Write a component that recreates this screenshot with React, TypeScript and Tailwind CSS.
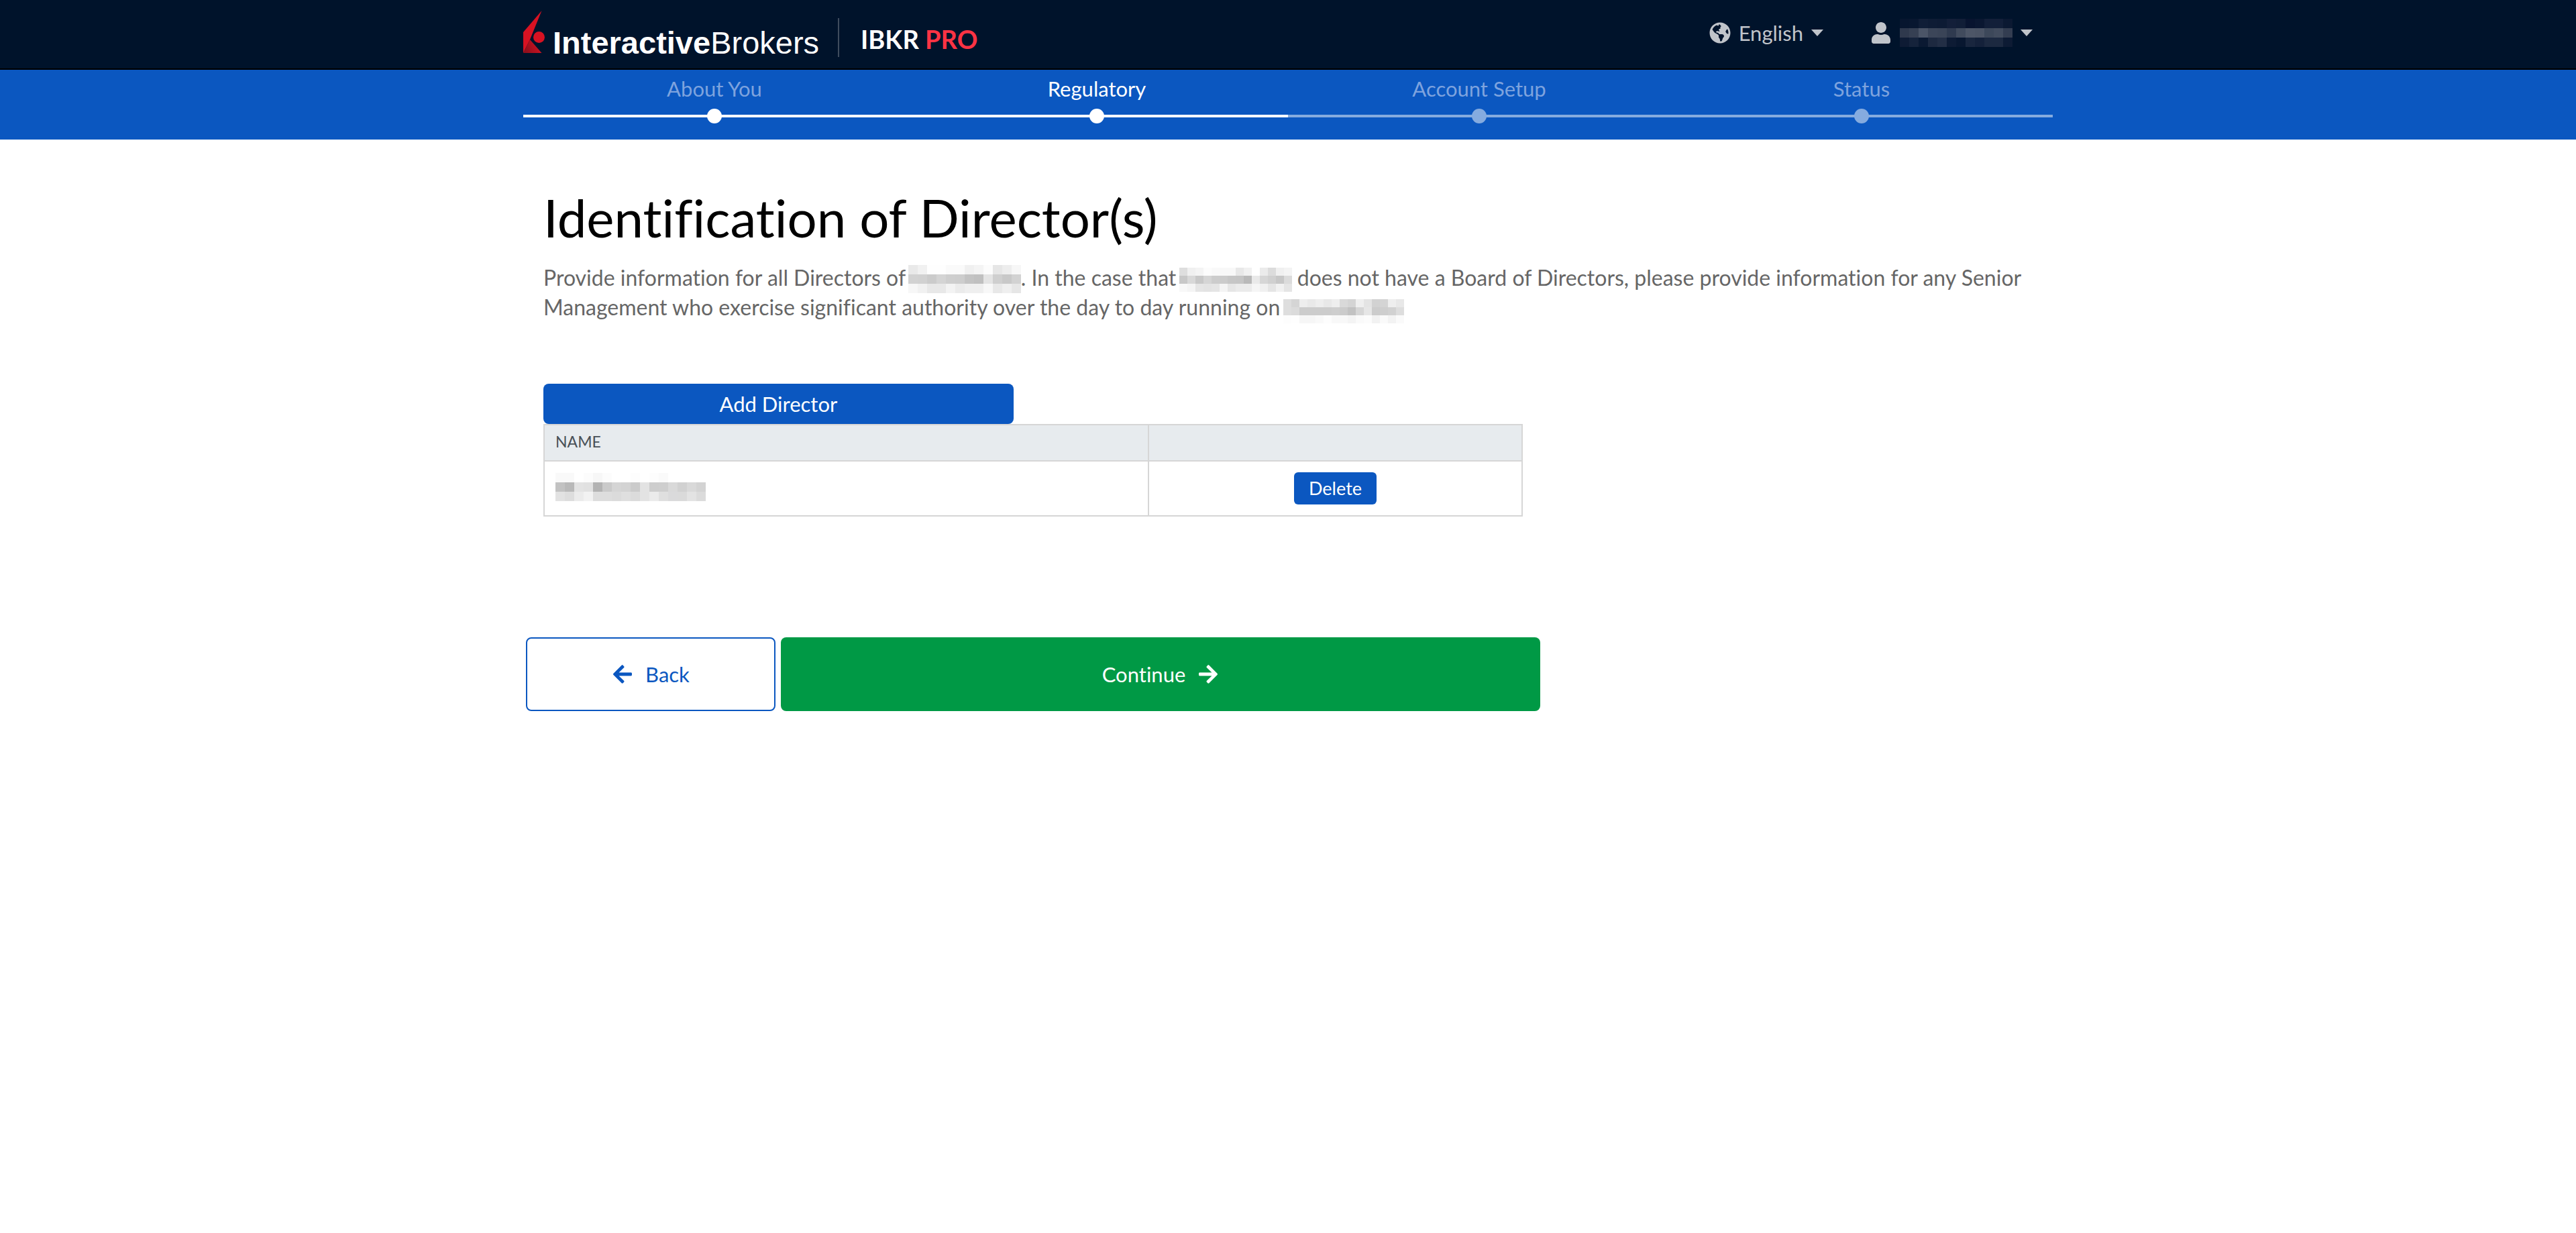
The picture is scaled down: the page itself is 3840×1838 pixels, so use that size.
import React from "react";
import { FaArrowLeft, FaArrowRight, FaGlobeAmericas, FaUser } from "react-icons/fa";

type MosaicProps = { label: string; cell: number; rows: string[][]; className?: string };

/* Redacted text, drawn as a coarse grid of flat tiles. */
function Mosaic({ label, cell, rows, className = "" }: MosaicProps) {
  const width = rows[0].length * cell;
  const height = rows.length * cell;
  return (
    <svg
      role="img"
      aria-label={label}
      width={width}
      height={height}
      viewBox={`0 0 ${width} ${height}`}
      shapeRendering="crispEdges"
      className={className}
    >
      {rows.map((row, y) =>
        row.map((shade, x) => (
          <rect key={`${x}-${y}`} x={x * cell} y={y * cell} width={cell} height={cell} fill={`#${shade}`} />
        )),
      )}
    </svg>
  );
}

const userRows = [
  ["07162f", "081730", "101e37", "0e1c35", "0d1b34", "131f39", "111e37", "08142f", "0a1731", "121f39", "121f39", "0b1932"],
  ["2f394d", "364053", "4b5567", "3c4659", "3a4457", "2f3a4f", "414b5d", "4d5667", "4b5465", "3d485a", "424c5e", "333d51"],
  ["0e1b34", "15233b", "0a1932", "1d2940", "222e45", "0d1b34", "081730", "19263e", "14213a", "1c2940", "1c2940", "0d1b34"],
];
const companyA = [
  ["e9e9e9", "f1f1f1", "fefefe", "fefefe", "fafafa", "fafafa", "f0f0f0", "f4f4f4", "fcfcfc", "e6e6e6", "ededed", "f7f7f7"],
  ["d2d2d2", "d1d1d1", "cbcbcb", "d4d4d4", "cecece", "cdcdcd", "c3c3c3", "c0c0c0", "e4e4e4", "cfcfcf", "c8c8c8", "d2d2d2"],
  ["f7f7f7", "f1f1f1", "e8e8e8", "e8e8e8", "f3f3f3", "ebebeb", "efefef", "efefef", "f8f8f8", "e8e8e8", "efefef", "e6e6e6"],
];
const companyB = [
  ["dedede", "f0f0f0", "f4f4f4", "fcfcfc", "f9f9f9", "f8f8f8", "f8f8f8", "e8e8e8", "f1f1f1", "ffffff", "ebebeb", "dcdcdc", "f0f0f0", "f4f4f4"],
  ["c8c8c8", "d8d8d8", "c8c8c8", "d5d5d5", "cccccc", "cbcbcb", "c6c6c6", "c5c5c5", "b9b9b9", "e9e9e9", "d6d6d6", "d0d0d0", "c7c7c7", "dbdbdb"],
  ["f8f8f8", "f4f4f4", "e5e5e5", "e3e3e3", "e5e5e5", "f4f4f4", "e6e6e6", "ebebeb", "ebebeb", "f5f5f5", "f0f0f0", "e5e5e5", "f1f1f1", "e5e5e5"],
];
const companyC = [
  ["dedede", "d5d5d5", "eeeeee", "e9e9e9", "eeeeee", "e8e8e8", "eeeeee", "d9d9d9", "d4d4d4", "efefef", "e4e4e4", "d2d2d2", "d4d4d4", "eeeeee", "e8e8e8"],
  ["dedede", "dbdbdb", "cccccc", "cccccc", "cccccc", "cccccc", "cecece", "cbcbcb", "c2c2c2", "d6d6d6", "e6e6e6", "cccccc", "cecece", "d1d1d1", "dddddd"],
  ["fdfdfd", "fefefe", "f6f6f6", "f6f6f6", "f9f9f9", "fdfdfd", "f8f8f8", "f8f8f8", "f4f4f4", "fafafa", "fcfcfc", "f2f2f2", "fafafa", "f3f3f3", "fafafa"],
];
const directorRows = [
  ["f9f9f9", "f9f9f9", "ffffff", "fcfcfc", "f7f7f7", "fcfcfc", "ffffff", "ffffff", "fdfdfd", "ffffff", "fdfdfd", "fafafa", "ffffff", "ffffff", "ffffff", "ffffff"],
  ["c2c2c2", "b9b9b9", "e3e3e3", "e1e1e1", "b3b3b3", "cacaca", "d5d5d5", "d3d3d3", "cbcbcb", "e3e3e3", "cdcdcd", "cecece", "d9d9d9", "d1d1d1", "d9d9d9", "d3d3d3"],
  ["e2e2e2", "dddddd", "ebebeb", "f2f2f2", "dddddd", "dddddd", "dbdbdb", "dfdfdf", "dbdbdb", "e3e3e3", "ebebeb", "dfdfdf", "dadadb", "dadada", "e3e3e3", "dbdbdb"],
];

const steps = [
  { name: "About You", reached: true, current: false },
  { name: "Regulatory", reached: true, current: true },
  { name: "Account Setup", reached: false, current: false },
  { name: "Status", reached: false, current: false },
];

function Caret() {
  return (
    <svg width="18" height="10" viewBox="0 0 18 10" fill="currentColor" aria-hidden="true">
      <path d="M0 0h18L9 10z" />
    </svg>
  );
}

function LogoMark() {
  return (
    <svg width="32" height="64" viewBox="0 0 32 64" aria-hidden="true">
      <defs>
        <linearGradient id="base" x1="0" y1="0.7" x2="1" y2="0.3">
          <stop offset="0" stopColor="#8c0f1c" />
          <stop offset="1" stopColor="#d81222" />
        </linearGradient>
      </defs>
      <path d="M0 32 27.500 0 10 43 0 63z" fill="#d81222" />
      <path d="M10 43 27.500 63H0z" fill="url(#base)" />
      <circle cx="23.500" cy="39.500" r="8.500" fill="#d81222" />
    </svg>
  );
}

export default function App() {
  return (
    <div className="min-h-screen bg-white font-['Lato',sans-serif] text-[31px] leading-[44px] text-[#666666] [font-variant-ligatures:none]">
      <header className="border-b-2 border-black bg-[#00132b]">
        <div className="mx-auto flex h-[102px] max-w-[2280px] items-start justify-between">
          <a href="#home" className="flex items-start pt-4">
            <LogoMark />
            <span className="ml-3 mt-[22px] font-['Liberation_Sans',sans-serif] text-[47px] leading-[52px] text-white">
              <b className="font-bold">Interactive</b>Brokers
            </span>
            <span className="ml-7 mt-[11px] h-[58px] w-[2px] bg-[#3f4c5e]" />
            <span className="ml-8 mt-[18px] text-[38px] font-bold leading-[48px] text-white">
              IBKR <span className="text-[#ff3344]">PRO</span>
            </span>
          </a>
          <nav aria-label="Account" className="flex gap-[70px] pr-[30px] pt-[27px] text-[#c0c4ca]">
            <button type="button" aria-haspopup="menu" className="flex items-center gap-3">
              <FaGlobeAmericas className="size-8" />
              <span>English</span>
              <Caret />
            </button>
            <button type="button" aria-haspopup="menu" className="flex items-center">
              <FaUser className="size-8" />
              <Mosaic label="User name" cell={14} rows={userRows} className="ml-3 mr-3" />
              <Caret />
            </button>
          </nav>
        </div>
      </header>

      <nav aria-label="Application progress" className="bg-[#0b57c0]">
        <ol className="mx-auto grid h-[104px] max-w-[2280px] grid-cols-4">
          {steps.map((s) => (
            <li
              key={s.name}
              aria-current={s.current ? "step" : undefined}
              className="flex flex-col items-center pt-[6px]"
            >
              <span className={s.current ? "text-white" : "text-[#7ea3de]"}>{s.name}</span>
              <span
                className={
                  s.reached
                    ? "mt-2 flex h-[22px] w-full items-center justify-center bg-[linear-gradient(#fff,#fff)] bg-[length:100%_4px] bg-center bg-no-repeat"
                    : "mt-2 flex h-[22px] w-full items-center justify-center bg-[linear-gradient(#85abdf,#85abdf)] bg-[length:100%_4px] bg-center bg-no-repeat"
                }
              >
                <span className={s.reached ? "size-[22px] rounded-full bg-white" : "size-[22px] rounded-full bg-[#85abdf]"} />
              </span>
            </li>
          ))}
        </ol>
      </nav>

      <main className="mx-auto max-w-[2280px]">
        <section className="px-[30px] pt-[70px]">
          <h1 className="text-[78px] leading-[92px] text-black">Identification of Director(s)</h1>
          <p className="mt-[22px] text-[32px]">
            Provide information for all Directors of{" "}
            <Mosaic label="Company name" cell={14} rows={companyA} className="-my-3 -ml-1 inline-block align-[1px]" />. In the
            case that{" "}
            <Mosaic label="Company name" cell={12} rows={companyB} className="-my-3 -ml-1 inline-block align-[3px]" /> does not
            have a Board of Directors, please provide information for any Senior Management who exercise significant authority
            over the day to day running on{" "}
            <Mosaic label="Company name" cell={12} rows={companyC} className="-my-3 -ml-1 inline-block align-[0px]" />
          </p>
        </section>

        <section className="w-2/3 px-[30px] pt-[92px]">
          <button type="button" className="block h-[60px] w-[48%] rounded-lg bg-[#0b57c0] text-white">
            Add Director
          </button>
          <table className="w-full table-fixed border-collapse border-2 border-[#d6d6d6]">
            <thead className="bg-[#e7ebee] text-[23px] text-[#495057]">
              <tr>
                <th scope="col" className="h-[54px] w-[61.8%] border-2 border-[#d6d6d6] px-4 pb-1 text-left font-normal">
                  NAME
                </th>
                <th className="border-2 border-[#d6d6d6]" aria-label="Actions" />
              </tr>
            </thead>
            <tbody>
              <tr>
                <td className="h-[82px] border-2 border-[#d6d6d6] px-4">
                  <Mosaic label="Director name" cell={14} rows={directorRows} className="-mt-1" />
                </td>
                <td className="border-2 border-[#d6d6d6] text-center">
                  <button type="button" className="mx-auto block h-12 rounded-md bg-[#0b57c0] px-[22px] text-[27px] text-white">
                    Delete
                  </button>
                </td>
              </tr>
            </tbody>
          </table>
        </section>

        <div className="mt-[180px] flex w-2/3">
          <div className="w-1/4 px-1">
            <button
              type="button"
              className="flex h-[110px] w-full items-center justify-center gap-[18px] rounded-lg border-2 border-[#0b57c0] text-[#0b57c0]"
            >
              <FaArrowLeft className="size-8" />
              Back
            </button>
          </div>
          <div className="w-3/4 px-1">
            <button
              type="button"
              className="flex h-[110px] w-full items-center justify-center gap-[18px] rounded-lg bg-[#009945] text-white"
            >
              Continue
              <FaArrowRight className="size-8" />
            </button>
          </div>
        </div>
      </main>
    </div>
  );
}
